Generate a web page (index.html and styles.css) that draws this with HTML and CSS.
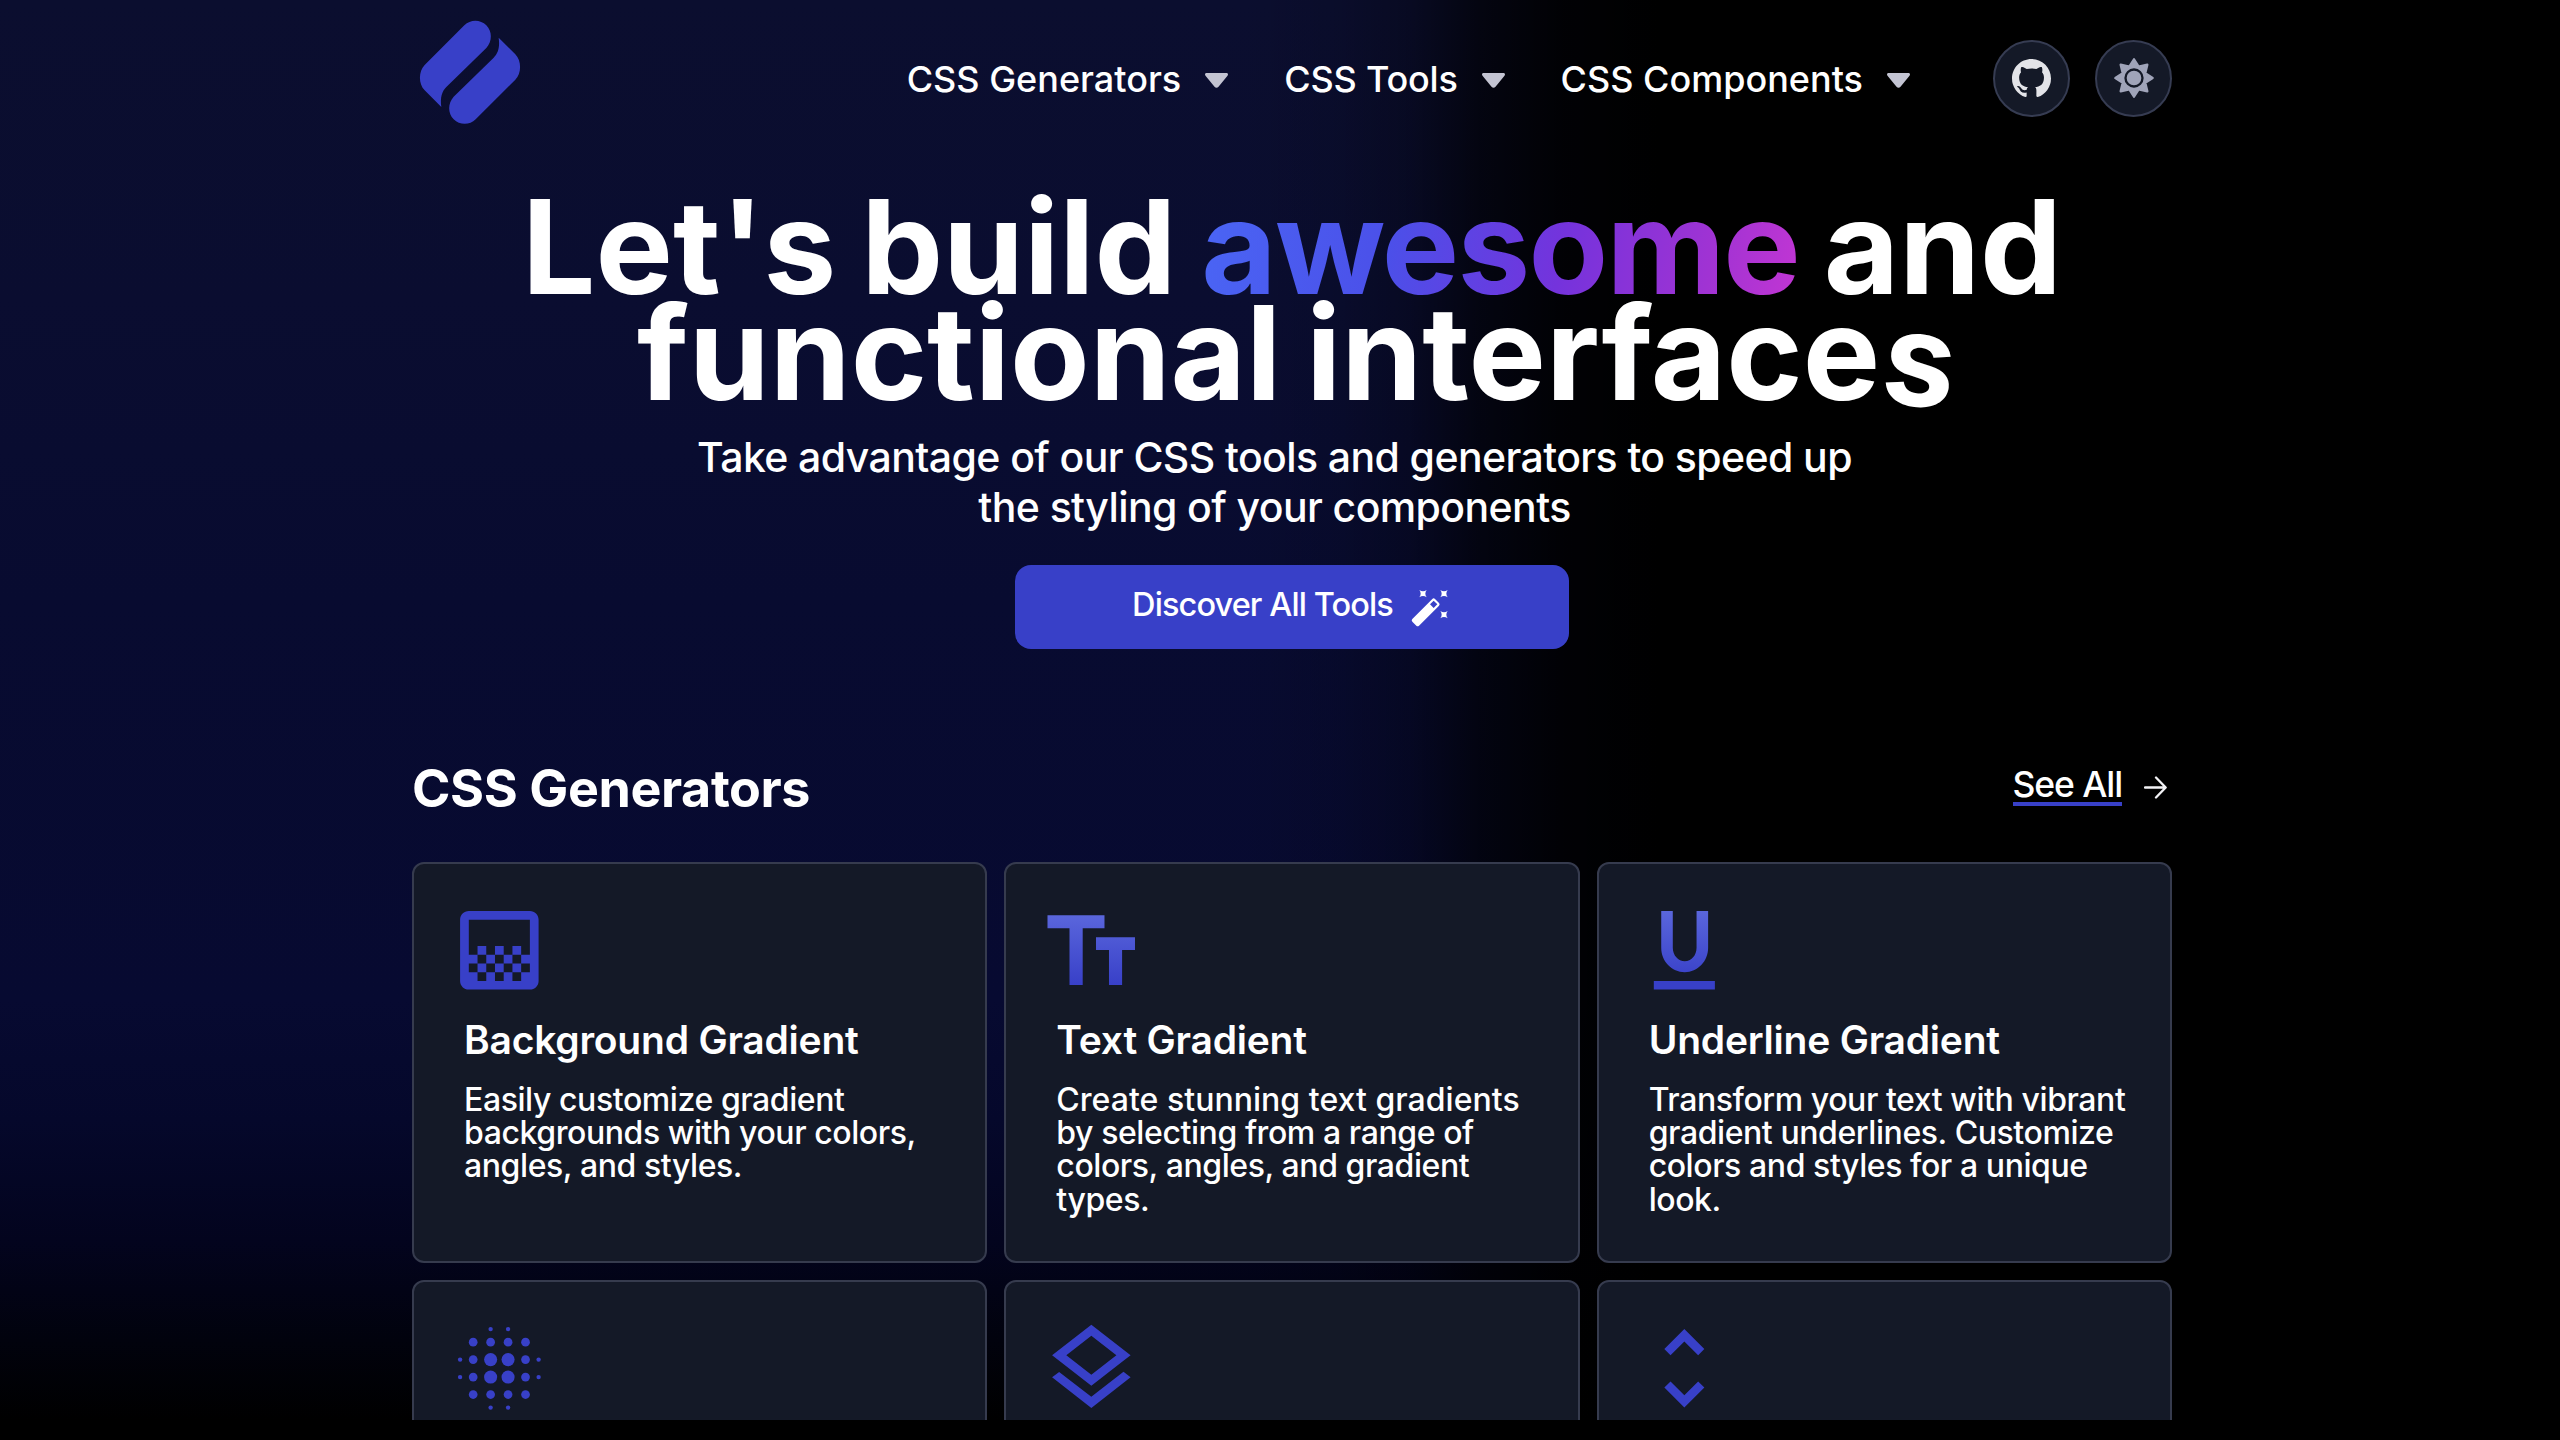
FILE: index.html
```
<!DOCTYPE html>
<html lang="en">
<head>
<meta charset="utf-8">
<title>CSS tools and generators</title>
<link rel="stylesheet" href="styles.css">
</head>
<body>
<div class="page">
  <header class="header">
    <a class="logo" aria-label="Home">
      <svg viewBox="0 0 375 375" width="125" height="125" fill="#3840c8">
        <path id="leaf" d="M163 46C181 28 211 28 229 46C247 64 247 94 229 114L109 231C96 244 90 262 94 291L44 241C25 222 25 184 44 165Z"/>
        <use href="#leaf" transform="rotate(180 180 187)"/>
      </svg>
    </a>
    <nav class="nav">
      <a class="nav-item">CSS Generators<svg class="caret" viewBox="0 0 23 15"><path d="M1.5 0h20c1.400 0 2 1.600 1 2.700L13.500 13.800c-1.200 1.400-2.800 1.400-4 0L.5 2.700C-.5 1.600.100 0 1.500 0z"/></svg></a>
      <a class="nav-item nav-tools">CSS Tools<svg class="caret" viewBox="0 0 23 15"><path d="M1.5 0h20c1.400 0 2 1.600 1 2.700L13.500 13.800c-1.200 1.400-2.800 1.400-4 0L.5 2.700C-.5 1.600.100 0 1.500 0z"/></svg></a>
      <a class="nav-item">CSS Components<svg class="caret" viewBox="0 0 23 15"><path d="M1.5 0h20c1.400 0 2 1.600 1 2.700L13.500 13.800c-1.200 1.400-2.800 1.400-4 0L.5 2.700C-.5 1.600.100 0 1.500 0z"/></svg></a>
    </nav>
    <div class="actions">
      <a class="round" aria-label="GitHub">
        <svg viewBox="0 0 16 16" width="39" height="39" fill="#e3e4e8"><path d="M8 0c4.420 0 8 3.580 8 8a8.013 8.013 0 0 1-5.450 7.590c-.4.080-.55-.17-.55-.38 0-.27.010-1.130.010-2.200 0-.75-.25-1.230-.54-1.480 1.780-.2 3.650-.88 3.650-3.950 0-.88-.31-1.590-.82-2.150.08-.2.360-1.020-.08-2.120 0 0-.67-.22-2.200.82-.64-.18-1.320-.27-2-.27-.68 0-1.360.090-2 .27-1.530-1.030-2.200-.82-2.200-.82-.44 1.100-.16 1.920-.08 2.120-.51.560-.82 1.280-.82 2.150 0 3.060 1.860 3.750 3.640 3.950-.23.200-.44.550-.51 1.070-.46.210-1.610.550-2.330-.66-.15-.24-.6-.83-1.230-.82-.67.010-.27.380.010.530.340.190.730.900.820 1.130.160.450.680 1.310 2.690.940 0 .670.010 1.300.010 1.490 0 .210-.15.450-.55.380A7.995 7.995 0 0 1 0 8c0-4.420 3.580-8 8-8Z"/></svg>
      </a>
      <a class="round" aria-label="Theme">
        <svg viewBox="-66 -66 132 132" width="44" height="44">
          <path d="M0-56L14-33.800L40-40L33.800-14L56 0L33.800 14L40 40L14 33.800L0 56L-14 33.800L-40 40L-33.800 14L-56 0L-33.800-14L-40-40L-14-33.800Z" fill="#a0a4b9" stroke="#a0a4b9" stroke-width="7" stroke-linejoin="round"/>
          <circle r="25.500" fill="#a0a4b9" stroke="#141927" stroke-width="7"/>
        </svg>
      </a>
    </div>
  </header>

  <section class="hero">
    <h1 class="headline">
      <span class="row">Let's build <span class="accent">awesome</span> and</span>
      <span class="row row-second">functional interface<span class="loose">s</span></span>
    </h1>
    <p class="lead">Take advantage of our CSS tools and generators to speed up<br>the styling of your components</p>
    <a class="cta"><span class="cta-label">Discover All Tools</span>
      <svg viewBox="60 50 120 120" width="40" height="40" fill="#fff">
        <path fill-rule="evenodd" d="M127 86Q131 81 135 86L147 98Q151 102 147 106L87 166Q83 170 79 166L67 154Q63 150 67 146ZM131 91L120 102L131 113L142 102Z"/>
        <path id="spark" d="M88 59Q99 67 110 59Q102 70 110 81Q99 73 88 81Q96 70 88 59Z"/>
        <use href="#spark" x="63"/>
        <use href="#spark" x="63" y="63"/>
      </svg>
    </a>
  </section>

  <section class="generators">
    <div class="section-head">
      <h2 class="section-title">CSS Generators</h2>
      <a class="see-all"><span class="see-all-label">See All</span>
        <svg class="arrow" viewBox="0 0 23 23" width="23" height="23" fill="none" stroke="#f2f2f5" stroke-width="2.300" stroke-linecap="round" stroke-linejoin="round"><path d="M1 11.500h20.500M12 1.500l9.700 10-9.700 10"/></svg>
      </a>
    </div>
    <div class="cards">
      <article class="card">
        <svg class="icon" viewBox="0 0 24 24"><path fill-rule="evenodd" d="M5 3h14c1.100 0 2 .9 2 2v14c0 1.100-.9 2-2 2H5c-1.100 0-2-.9-2-2V5c0-1.100.9-2 2-2zM5 5v8h2v-2h2v2h2v-2h2v2h2v-2h2v2h2V5zM7 13h2v2H7zM11 13h2v2h-2zM15 13h2v2h-2zM5 15h2v2H5zM9 15h2v2H9zM13 15h2v2h-2zM17 15h2v2h-2zM7 17h2v2H7zM11 17h2v2h-2zM15 17h2v2h-2z"/></svg>
        <h3 class="card-title">Background Gradient</h3>
        <p class="card-text">Easily customize gradient<br>backgrounds with your colors,<br>angles, and styles.</p>
      </article>
      <article class="card">
        <svg class="icon" viewBox="0 0 104.700 104.700">
          <defs><linearGradient id="fade-t" gradientUnits="userSpaceOnUse" x1="0" y1="17" x2="0" y2="87"><stop offset="0" stop-color="#5a66dc"/><stop offset="1" stop-color="#3840c8"/></linearGradient></defs>
          <path fill="url(#fade-t)" d="M8.500 17.300h57v12.900h-21.800v56.800h-13.200v-56.800h-22zM57 39.300h39v12.800h-12.900v34.900h-13.100v-34.900h-13z"/>
        </svg>
        <h3 class="card-title">Text Gradient</h3>
        <p class="card-text"><span class="roomy">Create stunning text gradients</span><br>by selecting from a range of<br>colors, angles, and gradient<br>types.</p>
      </article>
      <article class="card">
        <svg class="icon" viewBox="0 0 24 24">
          <defs><linearGradient id="fade-u" gradientUnits="userSpaceOnUse" x1="0" y1="3" x2="0" y2="19"><stop offset="0" stop-color="#5a66dc"/><stop offset="1" stop-color="#3840c8"/></linearGradient></defs>
          <path fill="url(#fade-u)" d="M12.100 17c2.950 0 5.350-2.500 5.350-5.600V3H14.800v8.400c0 1.750-1.200 3.100-2.700 3.100s-2.750-1.350-2.750-3.100V3H6.700v8.400C6.700 14.500 9.100 17 12.100 17zM5 19v2h14v-2H5z"/>
        </svg>
        <h3 class="card-title">Underline Gradient</h3>
        <p class="card-text">Transform your text with vibrant<br>gradient underlines. Customize<br>colors and styles for a unique<br>look.</p>
      </article>
      <article class="card">
        <svg class="icon" viewBox="0 0 24 24">
          <g id="dots-top">
            <circle cx="10" cy="3" r=".5"/><circle cx="14" cy="3" r=".5"/>
            <circle cx="6" cy="6" r="1"/><circle cx="10" cy="6" r="1"/><circle cx="14" cy="6" r="1"/><circle cx="18" cy="6" r="1"/>
            <circle cx="3" cy="10" r=".5"/><circle cx="6" cy="10" r="1"/><circle cx="10" cy="10" r="1.500"/><circle cx="14" cy="10" r="1.500"/><circle cx="18" cy="10" r="1"/><circle cx="21" cy="10" r=".5"/>
          </g>
          <use href="#dots-top" transform="matrix(1 0 0 -1 0 24)"/>
        </svg>
      </article>
      <article class="card">
        <svg class="icon" viewBox="0 0 24 24"><path d="M11.990 18.540l-7.370-5.730L3 14.070l9 7 9-7-1.630-1.270-7.380 5.740zM12 16l7.360-5.730L21 9l-9-7-9 7 1.630 1.270L12 16zm0-11.470L17.740 9 12 13.470 6.260 9 12 4.530z"/></svg>
      </article>
      <article class="card">
        <svg class="icon" viewBox="0 0 24 24"><path d="M12 5.830L15.170 9l1.410-1.410L12 3 7.410 7.590 8.830 9 12 5.830zm0 12.340L8.830 15l-1.410 1.410L12 21l4.590-4.590L15.170 15 12 18.170z"/></svg>
      </article>
    </div>
  </section>
</div>
</body>
</html>
```
FILE: styles.css
```
* {
  box-sizing: border-box;
}

html,
body {
  height: 1440px;
  overflow: hidden;
}

body {
  margin: 0;
  background: #000;
  color: #fff;
  font-family: Inter, "Liberation Sans", sans-serif;
  font-weight: 500;
}

h1, h2, h3, p {
  margin: 0;
}

svg {
  display: block;
  flex: none;
}

.page {
  height: 1420px;
  overflow: hidden;
  padding: 0 388px 0 412px;
  background:
    linear-gradient(90deg, transparent 1240px, rgba(0, 0, 0, 0.1) 1340px, rgba(0, 0, 0, 0.28) 1410px, rgba(0, 0, 0, 0.66) 1480px, rgba(0, 0, 0, 0.9) 1560px, #000 1660px),
    linear-gradient(180deg, #0b0e2f 0, #0a0d30 300px, #080b30 600px, #070a31 1000px, #05082b 1120px, #03041e 1240px, #01020d 1340px, #000 1420px);
}

.header {
  display: flex;
  align-items: center;
  height: 156px;
}

.logo {
  margin: 0 0 11px -2px;
}

.nav {
  display: flex;
  gap: 56px;
  margin-left: auto;
}

.nav-item {
  display: flex;
  align-items: center;
  gap: 24px;
  padding-top: 1px;
  font-size: 36px;
  line-height: 44px;
  white-space: nowrap;
}

.nav-tools {
  letter-spacing: -0.2px;
}

.caret {
  width: 23px;
  height: 15px;
  margin-top: 3px;
  fill: #c3c4d2;
}

.actions {
  display: flex;
  gap: 25px;
  margin-left: 83px;
}

.round {
  display: flex;
  align-items: center;
  justify-content: center;
  width: 77px;
  height: 77px;
  border: 2px solid #363c52;
  border-radius: 50%;
  background: #141927;
}

.hero {
  display: flex;
  flex-direction: column;
  align-items: center;
  padding-top: 38px;
}

.headline {
  font-size: 130px;
  font-weight: 700;
  line-height: 106px;
  text-align: center;
  white-space: nowrap;
}

.row {
  display: block;
  word-spacing: -6px;
}

.row-second {
  padding-left: 6px;
}

.accent {
  letter-spacing: -1.8px;
  background: linear-gradient(100deg, #4a66f5 0, #4b50e9 32%, #7433dc 60%, #a033d3 84%, #c436d3 100%);
  -webkit-background-clip: text;
  background-clip: text;
  color: transparent;
}

.loose {
  display: inline-block;
  transform: translate(4px, 6px) rotate(7deg);
}

.lead {
  margin: 26px 35px 0 0;
  font-size: 41px;
  line-height: 50px;
  letter-spacing: -0.6px;
  text-align: center;
}

.cta {
  display: flex;
  align-items: center;
  justify-content: center;
  gap: 17px;
  width: 554px;
  height: 84px;
  margin-top: 33px;
  padding-right: 2px;
  border-radius: 16px;
  background: #3840c8;
}

.cta-label {
  padding-bottom: 5px;
  font-size: 32.5px;
  line-height: 40px;
  letter-spacing: -0.9px;
}

.section-head {
  display: flex;
  align-items: flex-start;
  justify-content: space-between;
  height: 103px;
  margin-top: 110px;
}

.section-title {
  font-size: 52px;
  font-weight: 650;
  line-height: 60px;
  letter-spacing: -0.4px;
}

.see-all {
  display: flex;
  align-items: center;
  gap: 22px;
  margin: 8px 5px 0 0;
}

.see-all-label {
  border-bottom: 4px solid #3840c8;
  padding-top: 1px;
  font-size: 35.5px;
  line-height: 34px;
  letter-spacing: -1.1px;
}

.arrow {
  margin-top: 2px;
}

.cards {
  display: grid;
  grid-template-columns: repeat(3, 1fr);
  grid-auto-rows: 401px;
  gap: 17px;
}

.card {
  padding: 34px 20px 0 50px;
  border: 2px solid #363b4e;
  border-radius: 12px;
  background: #141927;
}

.icon {
  width: 104.7px;
  height: 104.7px;
  margin-left: -17px;
  fill: #3840c8;
}

.card-title {
  margin-top: 14px;
  font-size: 39px;
  font-weight: 600;
  line-height: 46px;
  letter-spacing: -0.22px;
}

.card-text {
  margin-top: 20px;
  font-size: 32px;
  line-height: 33.35px;
  letter-spacing: -0.42px;
  white-space: nowrap;
}

.roomy {
  letter-spacing: 0.03px;
}
```
